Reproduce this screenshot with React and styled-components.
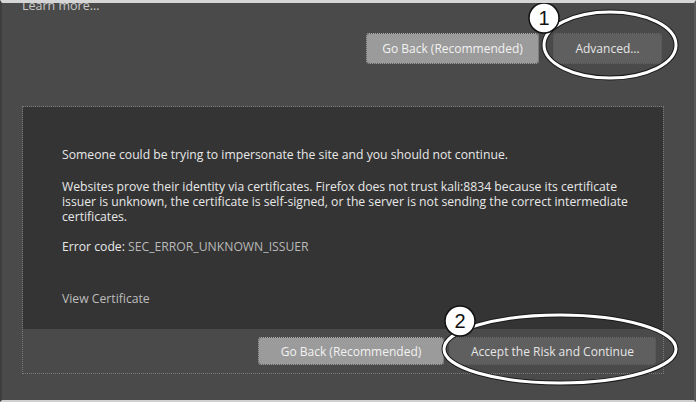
import React from 'react'
import styled, { createGlobalStyle } from 'styled-components'

const GlobalStyle = createGlobalStyle`
  html, body {
    margin: 0;
    padding: 0;
    background: #4a4a4a;
  }
  * {
    box-sizing: border-box;
  }
`

// styles
const Page = styled.div`
  position: relative;
  width: 696px;
  height: 402px;
  overflow: hidden;
  background: #4a4a4a;
  border-top: 3px solid #d6d6d6;
  border-bottom: 2px solid #d0d0d0;
  border-left: 2px solid #3e3e3e;
  border-right: 2px solid #5a5a5a;
  font-family: 'Open Sans', 'Noto Sans', sans-serif;
  color: #e4e4e4;
  display: flex;
  flex-direction: column;
`

const LearnMore = styled.div`
  margin: -4px 0 0 20px;
  height: 14px;
  font-size: 12.5px;
  line-height: 14px;
  color: #c8c8c8;
`

const Actions = styled.div`
  display: flex;
  justify-content: flex-end;
  gap: ${(p) => p.gap}px;
  padding: ${(p) => p.pad};
`

const Button = styled.button`
  height: ${(p) => p.h}px;
  width: ${(p) => p.w}px;
  border: none;
  border-radius: 2px;
  padding: 0;
  font-family: 'Open Sans', 'Noto Sans', sans-serif;
  font-size: 12px;
  color: ${(p) => (p.primary ? '#f2f2f2' : '#e6e6e6')};
  background: ${(p) => (p.primary ? '#9b9b9b' : '#5f5f5f')};
  outline: 1px dotted ${(p) => (p.primary ? '#b0b0b0' : '#6a6a6a')};
`

const Panel = styled.div`
  margin: 43px 30px 0 20px;
  border: 1px dotted #7a7a7a;
  display: flex;
  flex-direction: column;
`

const PanelBody = styled.div`
  height: 222px;
  background: #343434;
  padding: 40px 0 0 39px;
  font-size: 12.2px;
  line-height: 15px;
  color: #e8e8e8;
`

const Para = styled.p`
  margin: 0 0 ${(p) => p.after}px;
  width: 580px;
`

const Code = styled.span`
  color: #b9b9b9;
`

const CertLink = styled.div`
  color: #bdbdbd;
`

const PanelFooter = styled.div`
  height: 44px;
`

const Marks = styled.svg`
  position: absolute;
  left: -2px;
  top: -3px;
  pointer-events: none;
`

const Ring = ({ cx, cy, rx, ry }) => (
  <>
    <ellipse cx={cx} cy={cy} rx={rx} ry={ry} fill="none" stroke="#1a1a1a" strokeWidth="5" />
    <ellipse cx={cx} cy={cy} rx={rx} ry={ry} fill="none" stroke="#ffffff" strokeWidth="3" />
  </>
)

const Badge = ({ cx, cy, n }) => (
  <>
    <circle cx={cx} cy={cy} r="15" fill="#ffffff" stroke="#111" strokeWidth="1.5" />
    <text
      x={cx}
      y={cy + 7}
      textAnchor="middle"
      fontSize="20"
      fontFamily="'Liberation Sans', sans-serif"
      fill="#111"
    >
      {n}
    </text>
  </>
)

const App = () => (
  <>
    <GlobalStyle />
    <Page>
      <LearnMore>Learn more…</LearnMore>

      <Actions gap={16} pad="21px 33px 0 0">
        <Button primary w={171} h={29}>Go Back (Recommended)</Button>
        <Button w={107} h={29}>Advanced…</Button>
      </Actions>

      <Panel>
        <PanelBody>
          <Para after={17}>
            Someone could be trying to impersonate the site and you should not continue.
          </Para>
          <Para after={15}>
            Websites prove their identity via certificates. Firefox does not trust kali:8834 because its certificate
            issuer is unknown, the certificate is self-signed, or the server is not sending the correct intermediate
            certificates.
          </Para>
          <Para after={37}>
            Error code: <Code>SEC_ERROR_UNKNOWN_ISSUER</Code>
          </Para>
          <CertLink>View Certificate</CertLink>
        </PanelBody>
        <PanelFooter>
          <Actions gap={7} pad="9px 8px 0 0">
            <Button primary w={184} h={26}>Go Back (Recommended)</Button>
            <Button w={205} h={26}>Accept the Risk and Continue</Button>
          </Actions>
        </PanelFooter>
      </Panel>

      <Marks width="696" height="402" viewBox="0 0 696 402">
        <Ring cx={610} cy={45} rx={66} ry={33} />
        <Badge cx={544} cy={18} n="1" />
        <Ring cx={560} cy={349} rx={116} ry={34} />
        <Badge cx={460} cy={321} n="2" />
      </Marks>
    </Page>
  </>
)

export default App
